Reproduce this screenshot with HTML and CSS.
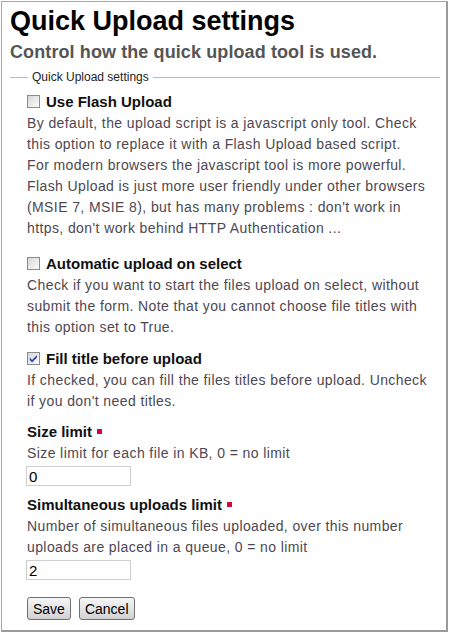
FILE: index.html
```html
<!DOCTYPE html>
<html>
<head>
<meta charset="utf-8">
<link rel="stylesheet" href="styles.css">
</head>
<body>
<div class="page">
  <h1 class="title">Quick Upload settings</h1>
  <h2 class="subtitle">Control how the quick upload tool is used.</h2>
  <form class="form">
    <fieldset class="fieldset">
      <legend class="legend">Quick Upload settings</legend>

      <div class="field field-first">
        <label class="check-label">
          <span class="checkbox"></span>
          <span>Use Flash Upload</span>
        </label>
        <p class="help">By default, the upload script is a javascript only tool. Check<br>this option to replace it with a Flash Upload based script.<br>For modern browsers the javascript tool is more powerful.<br>Flash Upload is just more user friendly under other browsers<br>(MSIE 7, MSIE 8), but has many problems : don't work in<br>https, don't work behind HTTP Authentication ...</p>
      </div>

      <div class="field">
        <label class="check-label">
          <span class="checkbox"></span>
          <span>Automatic upload on select</span>
        </label>
        <p class="help">Check if you want to start the files upload on select, without<br>submit the form. Note that you cannot choose file titles with<br>this option set to True.</p>
      </div>

      <div class="field field-tight">
        <label class="check-label">
          <span class="checkbox checked"><svg viewBox="0 0 13 13" width="13" height="13"><path d="M2.8 5.6 L5.1 8 L9.9 3 L9.9 5.4 L5.1 10.4 L2.8 8 Z" fill="#2b3fae"/></svg></span>
          <span>Fill title before upload</span>
        </label>
        <p class="help">If checked, you can fill the files titles before upload. Uncheck<br>if you don't need titles.</p>
      </div>

      <div class="field field-input">
        <label class="label">Size limit <span class="required"></span></label>
        <p class="help">Size limit for each file in KB, 0 = no limit</p>
        <input class="text-input" type="text" value="0">
      </div>

      <div class="field field-input">
        <label class="label">Simultaneous uploads limit <span class="required"></span></label>
        <p class="help">Number of simultaneous files uploaded, over this number<br>uploads are placed in a queue, 0 = no limit</p>
        <input class="text-input" type="text" value="2">
      </div>

      <div class="buttons">
        <button type="button" class="btn">Save</button>
        <button type="button" class="btn">Cancel</button>
      </div>
    </fieldset>
  </form>
</div>
</body>
</html>
```

FILE: styles.css
```css
html, body {
  margin: 0;
  padding: 0;
  background: #fff;
}
body {
  font-family: "Liberation Sans", Arial, sans-serif;
  color: #222;
}
.page {
  margin: 1px 2px 1px 1px;
  height: 628px;
  border: 1px solid #a8a8a8;
  border-right: 2px solid #9a9a9a;
  border-bottom: 2px solid #9a9a9a;
  padding: 0 6px 0 8px;
  box-sizing: content-box;
}
.title {
  margin: 0;
  padding-top: 3px;
  font-size: 27px;
  line-height: 32px;
  font-weight: bold;
  color: #000;
}
.subtitle {
  margin: 4px 0 0 0;
  font-size: 18px;
  line-height: 22px;
  font-weight: bold;
  letter-spacing: 0.1px;
  color: #555;
}
.form {
  margin: 0;
}
.fieldset {
  margin: 7px 0 0 0;
  padding: 0 4px 0 17px;
  border: none;
  border-top: 1px solid #9cc3df;
  min-width: 0;
}
.legend {
  padding: 0 4px;
  margin-left: 1px;
  font-size: 12px;
  line-height: 14px;
  color: #222;
}
.field {
  margin-top: 0;
  margin-bottom: 10px;
}
.field-first {
  margin-top: 7px;
  margin-bottom: 14px;
}
.field-tight {
  margin-bottom: 9px;
}
.field-input {
  margin-bottom: 8px;
}
.check-label {
  display: flex;
  align-items: center;
  gap: 6px;
  font-size: 15px;
  font-weight: bold;
  color: #111;
  line-height: 21px;
}
.label {
  display: block;
  font-size: 15px;
  font-weight: bold;
  color: #111;
  line-height: 21px;
}
.checkbox {
  display: inline-block;
  flex: none;
  width: 11px;
  height: 11px;
  border: 1px solid #8b8b8b;
  background: linear-gradient(135deg, #d8d8d8, #fbfbfb);
  position: relative;
}
.checkbox svg {
  position: absolute;
  left: -1px;
  top: -1px;
}
.required {
  display: inline-block;
  width: 5px;
  height: 5px;
  background: #d4063a;
  vertical-align: 3px;
  margin-left: 1px;
}
.help {
  margin: 1px 0 0 0;
  font-size: 14px;
  line-height: 21px;
  letter-spacing: 0.4px;
  white-space: nowrap;
  color: #4d4852;
}
.text-input {
  display: block;
  margin: 2px 0 0 -1px;
  width: 99px;
  height: 16px;
  padding: 1px 2px;
  border: 1px solid #cfcfcf;
  font-family: "Liberation Sans", Arial, sans-serif;
  font-size: 15px;
  color: #000;
}
.buttons {
  display: flex;
  gap: 8px;
  margin-top: 17px;
}
.btn {
  font-family: "Liberation Sans", Arial, sans-serif;
  font-size: 14px;
  color: #000;
  height: 23px;
  padding: 0 5px;
  border: 1px solid #707070;
  border-radius: 3px;
  background: linear-gradient(#f6f6f6, #e4e4e4 50%, #d2d2d2);
}
```
